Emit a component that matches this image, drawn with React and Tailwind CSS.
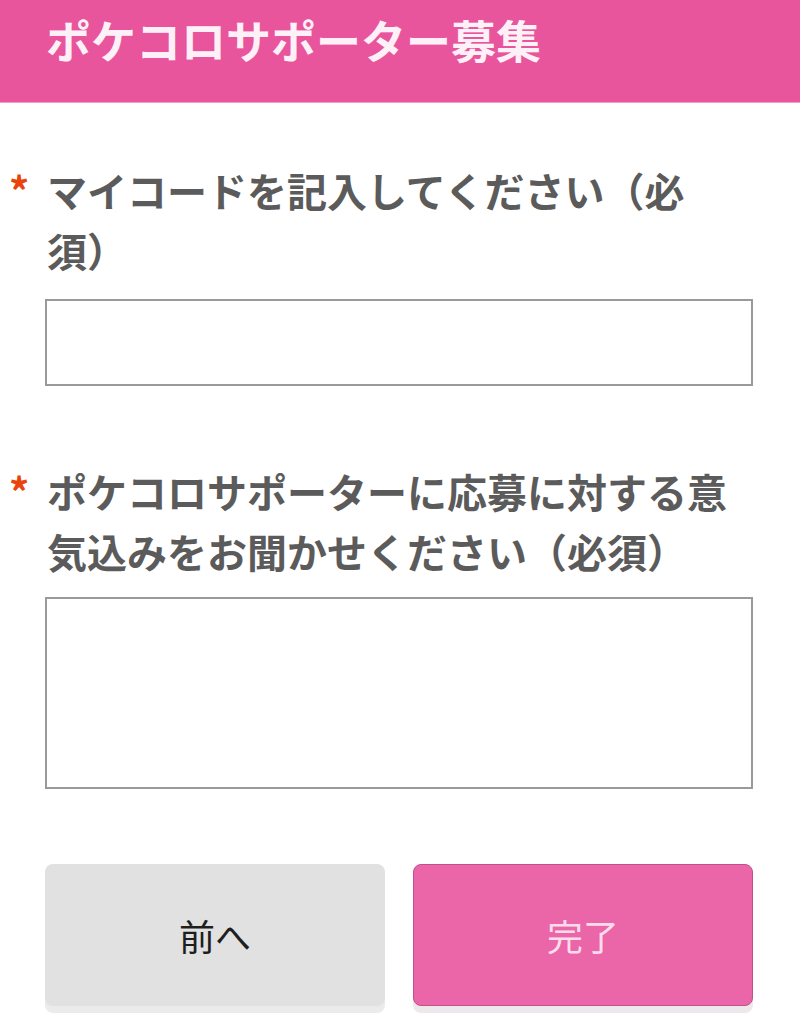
import React from 'react';

const font = { fontFamily: '"Noto Sans CJK JP", "Noto Sans", sans-serif' };

const Field = ({ label, children }) => (
  <div className="flex">
    <div className="w-[47px] shrink-0 pl-[9px] text-[40px] leading-[60px] font-bold text-[#e8440c]">*</div>
    <div className="w-[706px]">
      <div className="w-[690px] text-[40px] leading-[60px] font-bold text-[#5b5b5b]">{label}</div>
      {children}
    </div>
  </div>
);

export default function App() {
  return (
    <div className="w-[800px] h-[1024px] bg-white overflow-hidden" style={font}>
      <div className="h-[103px] bg-[#e8559c] pl-[46px] pt-[10px] border-b border-[#f0a0c6]">
        <h1 className="text-[45px] leading-[60px] font-bold text-[#fdf1f7]">ポケコロサポーター募集</h1>
      </div>

      <div className="pt-[57px]">
        <Field label="マイコードを記入してください（必須）">
          <input type="text" className="mt-[19px] block w-[708px] -ml-[2px] h-[87px] border-2 border-[#9a9a9a] bg-white outline-none" />
        </Field>

        <div className="h-[75px]" />

        <Field label="ポケコロサポーターに応募に対する意気込みをお聞かせください（必須）">
          <textarea className="mt-[16px] block w-[708px] -ml-[2px] h-[192px] border-2 border-[#9a9a9a] bg-white outline-none resize-none" />
        </Field>

        <div className="flex gap-[28px] pl-[45px] mt-[75px]">
          <button className="w-[340px] h-[142px] rounded-[8px] bg-[#e1e1e1] text-[36px] text-[#1e1e1e] shadow-[0_7px_0_#ebebeb]">
            前へ
          </button>
          <button className="w-[340px] h-[142px] rounded-[8px] bg-[#ea66a8] border border-[#c24f8c] text-[36px] text-[#fbdcec] shadow-[0_7px_0_#ede8eb]">
            完了
          </button>
        </div>
      </div>
    </div>
  );
}
